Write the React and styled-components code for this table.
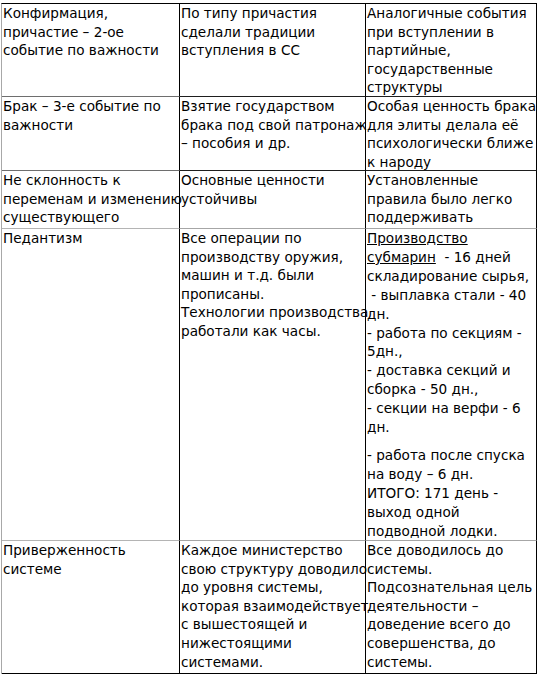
import React from "react";
import styled, { createGlobalStyle } from "styled-components";

const GlobalStyle = createGlobalStyle`
  html, body {
    margin: 0;
    background: #fff;
  }
  body {
    font-family: "DejaVu Sans", Verdana, sans-serif;
    font-size: 13.6px;
    color: #000;
  }
`;

const rows = [
  {
    height: 93,
    rule: "dark",
    cells: [
      ["Конфирмация,", "причастие – 2-ое", "событие по важности"],
      ["По типу причастия", "сделали традиции", "вступления в СС"],
      [
        "Аналогичные события",
        "при вступлении в",
        "партийные,",
        "государственные",
        "структуры",
      ],
    ],
  },
  {
    height: 74,
    rule: "dark",
    cells: [
      ["Брак – 3-е событие по", "важности"],
      ["Взятие государством", "брака под свой патронаж", "– пособия и др."],
      [
        "Особая ценность брака",
        "для элиты делала её",
        "психологически ближе",
        "к народу",
      ],
    ],
  },
  {
    height: 58,
    rule: "light",
    cells: [
      ["Не склонность к", "переменам и изменению", "существующего"],
      ["Основные ценности", "устойчивы"],
      ["Установленные", "правила было легко", "поддерживать"],
    ],
  },
  {
    height: 312,
    rule: "light",
    cells: [
      ["Педантизм"],
      [
        "Все операции по",
        "производству оружия,",
        "машин и т.д. были",
        "прописаны.",
        "Технологии производства",
        "работали как часы.",
      ],
      null,
    ],
  },
  {
    height: 133,
    rule: "black",
    cells: [
      ["Приверженность", "системе"],
      [
        "Каждое министерство",
        "свою структуру доводило",
        "до уровня системы,",
        "которая взаимодействует",
        "с вышестоящей и",
        "нижестоящими",
        "системами.",
      ],
      [
        "Все доводилось до",
        "системы.",
        "Подсознательная цель",
        "деятельности –",
        "доведение всего до",
        "совершенства, до",
        "системы.",
      ],
    ],
  },
];

const steps = [
  "складирование сырья,",
  " - выплавка стали - 40",
  "дн.",
  "- работа по секциям -",
  "5дн.,",
  "- доставка секций и",
  "сборка - 50 дн.,",
  "- секции на верфи - 6",
  "дн.",
];

const total = [
  "- работа после спуска",
  "на воду – 6 дн.",
  "ИТОГО: 171 день -",
  "выход одной",
  "подводной лодки.",
];

const ruleColors = {
  dark: ["#6e6e6e", "#1e1e1e"],
  light: ["#b4b4b4", "#a6a6a6"],
  black: ["#000", "#000"],
};

const Production = () => (
  <>
    <Para $lh={18.9}>
      <Line>
        <u>Производство</u>
      </Line>
      <Line>
        <u>субмарин</u>
        {"  - 16 дней"}
      </Line>
      {steps.map((s, i) => (
        <Line key={i}>{s}</Line>
      ))}
    </Para>
    <Para $lh={18.9} $gap={9}>
      {total.map((s, i) => (
        <Line key={i}>{s}</Line>
      ))}
    </Para>
  </>
);

const App = () => {
  return (
    <>
      <GlobalStyle />
      <Sheet $rows={rows.map((r) => r.height + "px").join(" ")}>
        {rows.map((row, r) =>
          row.cells.map((lines, c) => (
            <Cell
              key={r + "-" + c}
              $rule={ruleColors[row.rule][c === 0 ? 0 : 1]}
            >
              {lines ? (
                lines.map((l, i) => <Line key={i}>{l}</Line>)
              ) : (
                <Production />
              )}
            </Cell>
          ))
        )}
      </Sheet>
    </>
  );
};

const Sheet = styled.div`
  display: grid;
  grid-template-columns: 178px 186px 171px;
  grid-template-rows: ${(p) => p.$rows};
  width: max-content;
  margin: 3px 0 0 1px;
  border-top: 1px solid #000;
  border-left: 1px solid #a8a8a8;
`;

const Cell = styled.div`
  box-sizing: border-box;
  padding: 0 0 0 1px;
  border-right: 1px solid #000;
  border-bottom: 1px solid ${(p) => p.$rule};
  line-height: 18.6px;
  overflow: visible;
  min-width: 0;
`;

const Line = styled.div`
  white-space: pre;
`;

const Para = styled.div`
  line-height: ${(p) => p.$lh}px;
  margin-top: ${(p) => p.$gap || 0}px;
`;

export default App;
